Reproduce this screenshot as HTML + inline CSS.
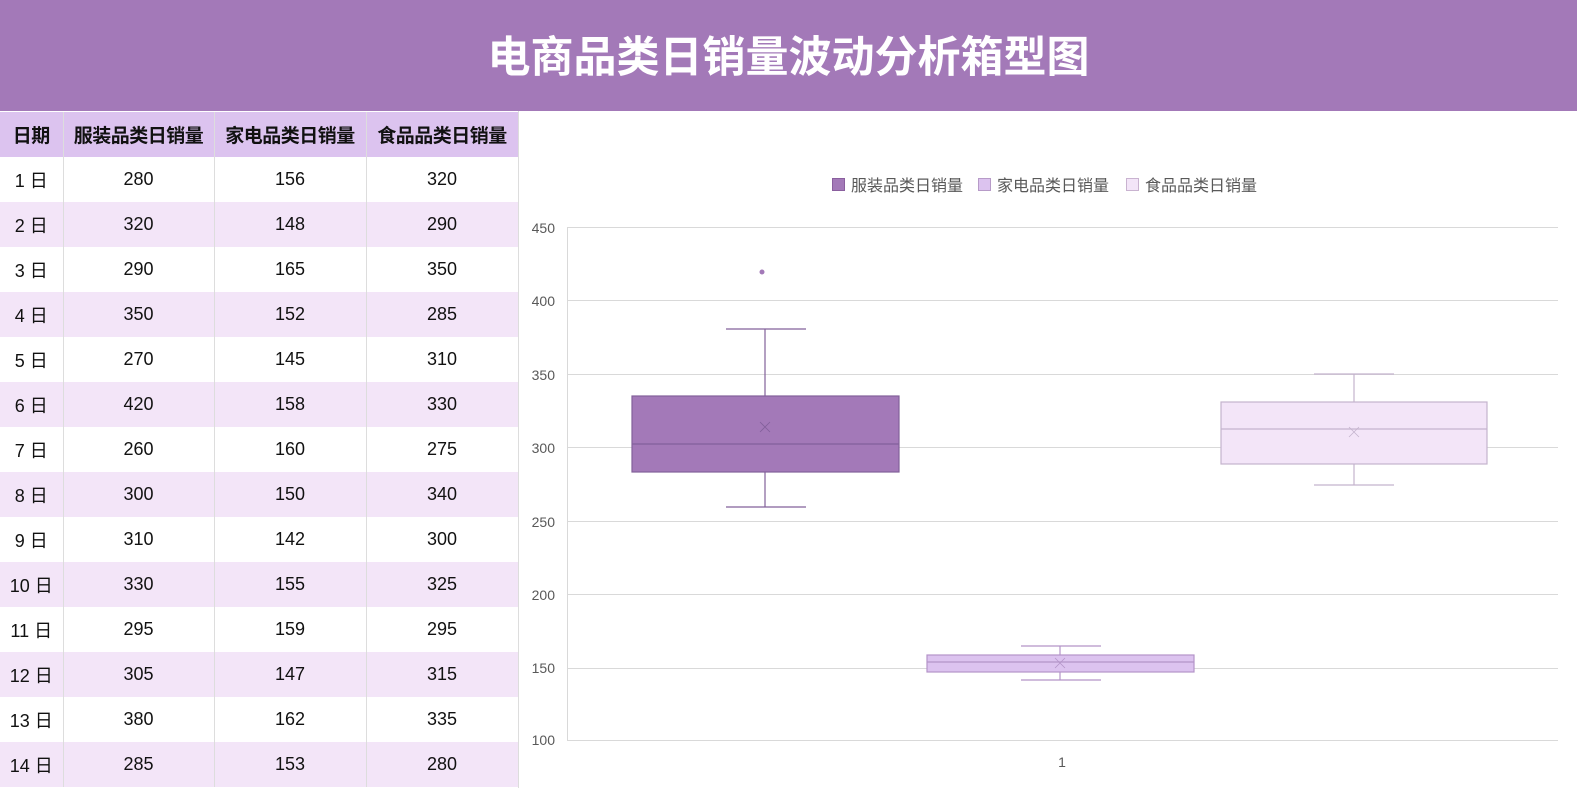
<!DOCTYPE html>
<html><head><meta charset="utf-8"><style>
body{margin:0;width:1577px;height:788px;overflow:hidden;background:#fff;font-family:"Liberation Sans","Noto Sans CJK SC",sans-serif;position:relative}
.title{position:absolute;left:0;top:0;width:1577px;height:111px;background:#a379b8;color:#fff;font-size:43px;font-weight:bold;text-align:center;line-height:116px}
table{position:absolute;left:0;top:112px;border-collapse:collapse;width:518px;table-layout:fixed}
td,th{height:45px;padding:0;text-align:center;font-size:18px;color:#111;border-right:1px solid #ddd;white-space:nowrap}
th{background:#dcc3ef;font-weight:bold;font-size:19px;letter-spacing:-0.5px}
tr:nth-child(odd) td{background:#f3e5f8}
.c0{width:63px}.c1{width:151px}.c2{width:152px}.c3{width:152px}
</style></head><body>
<div class="title">电商品类日销量波动分析箱型图</div>
<table>
<colgroup><col class="c0"><col class="c1"><col class="c2"><col class="c3"></colgroup>
<tr><th>日期</th><th>服装品类日销量</th><th>家电品类日销量</th><th>食品品类日销量</th></tr>
<tr><td>1 日</td><td>280</td><td>156</td><td>320</td></tr>
<tr><td>2 日</td><td>320</td><td>148</td><td>290</td></tr>
<tr><td>3 日</td><td>290</td><td>165</td><td>350</td></tr>
<tr><td>4 日</td><td>350</td><td>152</td><td>285</td></tr>
<tr><td>5 日</td><td>270</td><td>145</td><td>310</td></tr>
<tr><td>6 日</td><td>420</td><td>158</td><td>330</td></tr>
<tr><td>7 日</td><td>260</td><td>160</td><td>275</td></tr>
<tr><td>8 日</td><td>300</td><td>150</td><td>340</td></tr>
<tr><td>9 日</td><td>310</td><td>142</td><td>300</td></tr>
<tr><td>10 日</td><td>330</td><td>155</td><td>325</td></tr>
<tr><td>11 日</td><td>295</td><td>159</td><td>295</td></tr>
<tr><td>12 日</td><td>305</td><td>147</td><td>315</td></tr>
<tr><td>13 日</td><td>380</td><td>162</td><td>335</td></tr>
<tr><td>14 日</td><td>285</td><td>153</td><td>280</td></tr>
</table>
<svg style="position:absolute;left:0;top:0" width="1577" height="788" font-family="Liberation Sans, Noto Sans CJK SC, sans-serif">
<line x1="518.5" y1="111" x2="518.5" y2="788" stroke="#ddd"/>
<g stroke="#d9d9d9" stroke-width="1">
<line x1="567" y1="227.5" x2="1558" y2="227.5"/><line x1="567" y1="300.5" x2="1558" y2="300.5"/>
<line x1="567" y1="374.5" x2="1558" y2="374.5"/><line x1="567" y1="447.5" x2="1558" y2="447.5"/>
<line x1="567" y1="521.5" x2="1558" y2="521.5"/><line x1="567" y1="594.5" x2="1558" y2="594.5"/>
<line x1="567" y1="668.5" x2="1558" y2="668.5"/><line x1="567" y1="740.5" x2="1558" y2="740.5"/>
<line x1="567.5" y1="227" x2="567.5" y2="741"/>
</g>
<g fill="#595959" font-size="14" text-anchor="end">
<text x="555" y="233">450</text><text x="555" y="306">400</text><text x="555" y="380">350</text>
<text x="555" y="453">300</text><text x="555" y="527">250</text><text x="555" y="600">200</text>
<text x="555" y="673">150</text><text x="555" y="745">100</text>
</g>
<text x="1062" y="767" fill="#595959" font-size="14" text-anchor="middle">1</text>
<g font-size="16" fill="#595959">
<rect x="832.5" y="178.5" width="12" height="12" fill="#a379b8" stroke="#8a5f9e"/><text x="851" y="191">服装品类日销量</text>
<rect x="978.5" y="178.5" width="12" height="12" fill="#dcc3ef" stroke="#b79bc8"/><text x="997" y="191">家电品类日销量</text>
<rect x="1126.5" y="178.5" width="12" height="12" fill="#f3e5f8" stroke="#c9b3d0"/><text x="1145" y="191">食品品类日销量</text>
</g>
<g stroke="#82609a" stroke-width="1.2" fill="none">
<line x1="765" y1="329" x2="765" y2="396"/><line x1="726" y1="329" x2="806" y2="329"/>
<line x1="765" y1="472" x2="765" y2="507"/><line x1="726" y1="507" x2="806" y2="507"/>
<rect x="632" y="396" width="267" height="76" fill="#a379b8"/>
<line x1="632" y1="444" x2="899" y2="444"/>
<path d="M760 422l10 10M770 422l-10 10" stroke-width="0.8"/>
</g>
<circle cx="762" cy="272" r="2.5" fill="#a379b8"/>
<g stroke="#b394c8" stroke-width="1.2" fill="none">
<line x1="1060" y1="646" x2="1060" y2="655"/><line x1="1021" y1="646" x2="1101" y2="646"/>
<line x1="1060" y1="672" x2="1060" y2="680"/><line x1="1021" y1="680" x2="1101" y2="680"/>
<rect x="927" y="655" width="267" height="17" fill="#dcc3ef"/>
<line x1="927" y1="662" x2="1194" y2="662"/>
<path d="M1055 658l10 10M1065 658l-10 10" stroke-width="0.8"/>
</g>
<g stroke="#c4b3cd" stroke-width="1.2" fill="none">
<line x1="1354" y1="374" x2="1354" y2="402"/><line x1="1314" y1="374" x2="1394" y2="374"/>
<line x1="1354" y1="464" x2="1354" y2="485"/><line x1="1314" y1="485" x2="1394" y2="485"/>
<rect x="1221" y="402" width="266" height="62" fill="#f3e5f8"/>
<line x1="1221" y1="429" x2="1487" y2="429"/>
<path d="M1349 427l10 10M1359 427l-10 10" stroke-width="0.8"/>
</g>
</svg>
</body></html>
